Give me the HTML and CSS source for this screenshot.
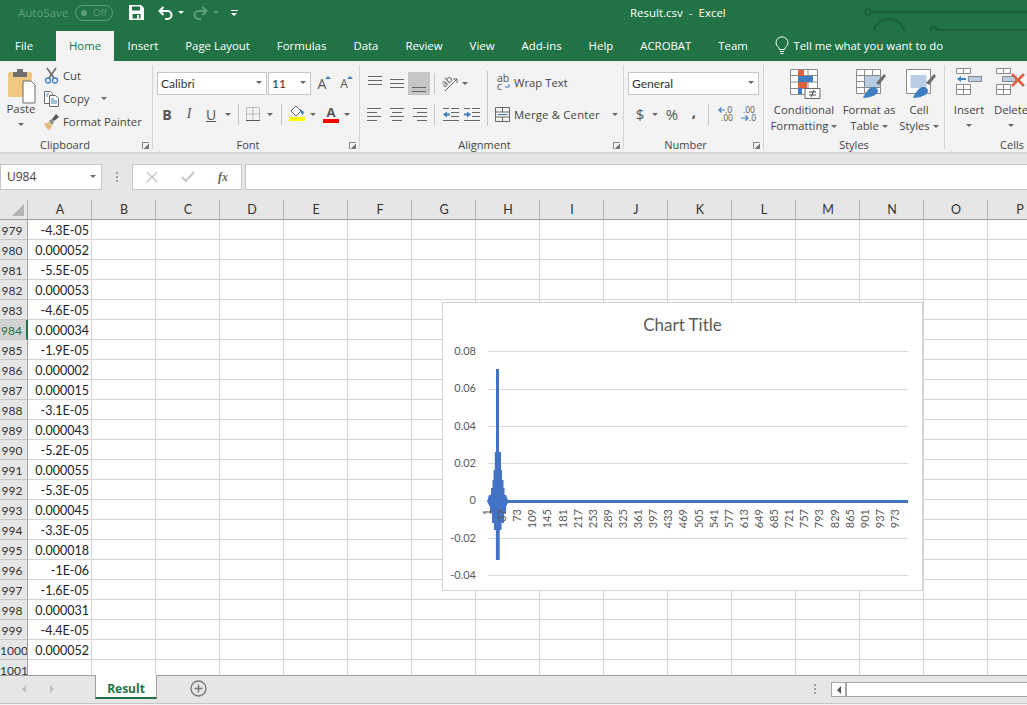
FILE: index.html
```html
<!DOCTYPE html>
<html lang="en">
<head>
    <meta charset="UTF-8">
    <title>Result.csv - Excel</title>
    <link rel="stylesheet" href="styles.css">
</head>
<body>
<div class="app">

    <div class="titlebar">
        <span class="autosave">AutoSave</span>
        <span class="toggle"><i></i><b>Off</b></span>
        <svg class="qa-save" width="15" height="15" viewBox="0 0 15 15"><path d="M0 0h12l3 3v12H0z" fill="#fff"/><path d="M3 1.500h8v4H3zM3.500 9h8v4.500h-8z" fill="#217346"/><path d="M8 10h2v3.500H8z" fill="#fff"/></svg>
        <svg class="qa-undo" width="15" height="14" viewBox="0 0 15 14"><path d="M5.500 1 1.500 5l4 4M2 5h7.500a4 4 0 0 1 0 8H7" fill="none" stroke="#fff" stroke-width="2"/></svg>
        <span class="caret white qa-c1"></span>
        <svg class="qa-redo" width="15" height="14" viewBox="0 0 15 14"><path d="M9.500 1l4 4-4 4M13 5H5.500a4 4 0 0 0 0 8H8" fill="none" stroke="#5e9d7b" stroke-width="2"/></svg>
        <span class="caret dim qa-c2"></span>
        <span class="qa-more"></span>
        <span class="doc-title">Result.csv&nbsp; -&nbsp; Excel</span>
        <svg class="circuit" width="170" height="61" viewBox="0 0 170 61"><g fill="none" stroke="#1b6239" stroke-width="2.500"><circle cx="11" cy="12" r="3"/><path d="M14 12h156"/><path d="M16 35a16 16 0 0 1 32 0"/><circle cx="77" cy="30" r="3"/><path d="M80 30h90"/></g></svg>
    </div>

    <div class="tabs">
        <span class="tab file">File</span>
        <span class="tab active">Home</span>
        <span class="tab">Insert</span>
        <span class="tab">Page Layout</span>
        <span class="tab">Formulas</span>
        <span class="tab">Data</span>
        <span class="tab">Review</span>
        <span class="tab">View</span>
        <span class="tab">Add-ins</span>
        <span class="tab">Help</span>
        <span class="tab">ACROBAT</span>
        <span class="tab">Team</span>
        <span class="tellme">
            <svg width="14" height="18" viewBox="0 0 14 18"><path d="M4.500 12.500C4 10 1 9 1 5.800a6 6 0 0 1 12 0C13 9 10 10 9.500 12.500zM5 14.500h4M5.500 16.500h3" fill="none" stroke="#fff"/></svg>
            Tell me what you want to do
        </span>
    </div>

    <div class="ribbon">

        <div class="group g-clip">
            <div class="group-body">
                <div class="big paste">
                    <svg width="28" height="34" viewBox="0 0 28 34"><rect y="3" width="24" height="25" rx="2" fill="#f0c87f"/><path d="M5 8V3h4V0h6v3h4v5z" fill="#707070"/><path d="M15 12h8l4 4v18H15z" fill="#fff" stroke="#6a6a6a"/></svg>
                    <span>Paste</span>
                    <span class="caret big-caret"></span>
                </div>
                <div class="stack">
                    <div class="small"><svg width="16" height="16" viewBox="0 0 16 16"><path d="M3 0l7 10M12 0 5 10" stroke="#6a6a6a" stroke-width="1.600" fill="none"/><circle cx="4" cy="12.500" r="2.500" fill="none" stroke="#3f7fc1" stroke-width="1.300"/><circle cx="11" cy="12.500" r="2.500" fill="none" stroke="#3f7fc1" stroke-width="1.300"/></svg>Cut</div>
                    <div class="small"><svg width="16" height="16" viewBox="0 0 16 16"><path d="M.5.500h6l2 2v10h-8z" fill="#fff" stroke="#6a6a6a"/><path d="M5.500 4.500h6l3 3v8h-9z" fill="#fff" stroke="#6a6a6a"/><path d="M7 8h3M7 10h6M7 12h6M2 3h3M2 5h2" stroke="#3f7fc1"/></svg>Copy<span class="caret copy-caret"></span></div>
                    <div class="small"><svg width="16" height="16" viewBox="0 0 16 16"><path d="M0 9c2 1 3 0 5-1l3 4c-1 2-2 3-3 4-2-1-4-4-5-7z" fill="#e3b97a"/><path d="M5 7l3-2 2 3-2 3z" fill="#8a8a8a"/><path d="M8 5l4-5 3 3-5 4z" fill="#555"/></svg>Format Painter</div>
                </div>
            </div>
            <div class="group-label">Clipboard<span class="launcher"></span></div>
        </div>

        <div class="group g-font">
            <div class="group-body col">
                <div class="row-top font-top">
                    <div class="combo font-name">Calibri<span class="caret"></span></div>
                    <div class="combo font-size">11<span class="caret"></span></div>
                    <span class="tool w22 grow">A<i></i></span>
                    <span class="tool w22 shrink">A<i></i></span>
                </div>
                <div class="row-bottom">
                    <span class="tool w22 fmt"><b>B</b></span>
                    <span class="tool w22 fmt"><em>I</em></span>
                    <span class="tool w22 fmt"><u>U</u></span>
                    <span class="tool w12"><span class="caret"></span></span>
                    <span class="sep"></span>
                    <span class="tool w18"><svg width="14" height="14" viewBox="0 0 14 14"><path d="M.5.500h13v13H.5zM7 .5v13M.5 7h13" fill="none" stroke="#888" stroke-dasharray="1 1"/><path d="M0 13.500h14" stroke="#555"/></svg></span>
                    <span class="tool w15"><span class="caret"></span></span>
                    <span class="sep"></span>
                    <span class="tool w20"><svg width="16" height="16" viewBox="0 0 16 16"><path d="M2 5 7 0l5 5-5 5z" fill="#fff" stroke="#666"/><path d="M11 3l4 3-1 3-2-2z" fill="#3f7fc1"/><path d="M0 11h16v4H0z" fill="#ffff00"/></svg></span>
                    <span class="tool w12"><span class="caret"></span></span>
                    <span class="tool w24 color-a">A<i></i></span>
                    <span class="tool w8"><span class="caret"></span></span>
                </div>
            </div>
            <div class="group-label">Font<span class="launcher"></span></div>
        </div>

        <div class="group g-align">
            <div class="group-body">
                <div class="align-left">
                    <div class="row-top">
                        <span class="tool w22 lines l-top"><i></i><i></i><i></i></span>
                        <span class="tool w22 lines l-mid"><i></i><i></i><i></i></span>
                        <span class="tool w22 lines l-bot on"><i></i><i></i></span>
                        <span class="sep"></span>
                        <span class="tool w20 orient"><svg width="16" height="16" viewBox="0 0 16 16"><path d="M3 15 15 3M15 3h-4M15 3v4" fill="none" stroke="#666"/><text x="0" y="9" transform="rotate(-42 5 7)" class="orient-text">ab</text></svg></span>
                        <span class="tool w10"><span class="caret"></span></span>
                    </div>
                    <div class="row-bottom">
                        <span class="tool w22 lines h-left"><i></i><i></i><i></i><i></i></span>
                        <span class="tool w22 lines h-center"><i></i><i></i><i></i><i></i></span>
                        <span class="tool w22 lines h-right"><i></i><i></i><i></i><i></i></span>
                        <span class="sep"></span>
                        <span class="tool w21"><svg width="16" height="13" viewBox="0 0 16 13"><path d="M8 .5h8M8 4.500h8M8 8.500h8M0 12.500h16M0 .5h6" stroke="#666" fill="none"/><path d="M0 6.500l4-3v2h3v2H4v2z" fill="#3f7fc1"/></svg></span>
                        <span class="tool w21"><svg width="16" height="13" viewBox="0 0 16 13"><path d="M8 .5h8M8 4.500h8M8 8.500h8M0 12.500h16M0 .5h6" stroke="#666" fill="none"/><path d="M7 6.500l-4-3v2H0v2h3v2z" fill="#3f7fc1"/></svg></span>
                    </div>
                </div>
                <span class="sep tall"></span>
                <div class="align-right">
                    <div class="small wrap"><svg width="13" height="17" viewBox="0 0 13 17"><text x="0" y="8" class="wrap-ab">ab</text><text x="0" y="16" class="wrap-ab">c</text><path d="M12 10v3H8" fill="none" stroke="#3f7fc1"/></svg>Wrap Text</div>
                    <div class="small merge"><svg width="15" height="15" viewBox="0 0 15 15"><path d="M.5.500h14v14H.5zM.5 5h14M.5 10h14M7.500.5V5M7.500 10v4.500" fill="none" stroke="#666"/><path d="M2.500 7.500h10" stroke="#3f7fc1"/></svg>Merge &amp; Center<span class="caret merge-caret"></span></div>
                </div>
            </div>
            <div class="group-label">Alignment<span class="launcher"></span></div>
        </div>

        <div class="group g-number">
            <div class="group-body col">
                <div class="row-top number-top">
                    <div class="combo number-format">General<span class="caret"></span></div>
                </div>
                <div class="row-bottom number-bottom">
                    <span class="tool w20 sym">$</span>
                    <span class="tool w10"><span class="caret"></span></span>
                    <span class="tool w22 sym pct">%</span>
                    <span class="tool w22 sym comma">,</span>
                    <span class="sep"></span>
                    <span class="tool w22"><svg width="15" height="16" viewBox="0 0 15 16"><text x="7" y="7" class="dec-text">.0</text><text x="3" y="15" class="dec-text">.00</text><path d="M7 4H1M3.500 1.500 1 4l2.500 2.500" fill="none" stroke="#3f7fc1" stroke-width="1.200"/></svg></span>
                    <span class="tool w22"><svg width="15" height="16" viewBox="0 0 15 16"><text x="3" y="7" class="dec-text">.00</text><text x="9" y="15" class="dec-text">.0</text><path d="M1 12h7M5.500 9.500 8 12l-2.500 2.500" fill="none" stroke="#3f7fc1" stroke-width="1.200"/></svg></span>
                </div>
            </div>
            <div class="group-label">Number<span class="launcher"></span></div>
        </div>

        <div class="group g-styles">
            <div class="group-body">
                <div class="big style-btn w70">
                    <svg class="icon-cond" width="30" height="30" viewBox="0 0 30 30"><path d="M.5.500h27v25H.5zM9 .5v25M18 .5v25M.5 6.500h27M.5 13h27M.5 19.500h27" fill="#fff" stroke="#8a8a8a"/><path d="M8 1h6v6H8zM8 13h9v6H8z" fill="#e0603c"/><path d="M8 7h15v6H8zM8 19h4v6H8z" fill="#3f7fc1"/><path d="M15 19.500h15v10H15z" fill="#fff" stroke="#666"/><path d="M19 23h7M19 26h7M24 21l-3 7" stroke="#444"/></svg>
                    <span>Conditional</span>
                    <span>Formatting<span class="caret inline"></span></span>
                </div>
                <div class="big style-btn w60">
                    <svg class="icon-shift" width="30" height="30" viewBox="0 0 30 30"><path d="M.5.500h24v24H.5zM.5 6.500h24M.5 12.500h24M.5 18.500h24M8.500.5v24M16.500.5v24" fill="#fff" stroke="#8a8a8a"/><path d="M8.500 6.500h16v12h-16z" fill="#b9cde4" stroke="#8a8a8a"/><path d="M20 14l8-9 2 2-7 9z" fill="#6e6e6e"/><path d="M7 29c2-5 6-11 10-11 3 0 5 2 5 4 0 4-8 7-15 7z" fill="#3f7fc1"/></svg>
                    <span>Format as</span>
                    <span>Table<span class="caret inline"></span></span>
                </div>
                <div class="big style-btn w40">
                    <svg class="icon-shift" width="30" height="30" viewBox="0 0 30 30"><path d="M.5.500h24v24H.5z" fill="#fff" stroke="#8a8a8a"/><path d="M4.500 6h16v13h-16z" fill="#b9cde4"/><path d="M20 14l8-9 2 2-7 9z" fill="#6e6e6e"/><path d="M7 29c2-5 6-11 10-11 3 0 5 2 5 4 0 4-8 7-15 7z" fill="#3f7fc1"/></svg>
                    <span>Cell</span>
                    <span>Styles<span class="caret inline"></span></span>
                </div>
            </div>
            <div class="group-label">Styles</div>
        </div>

        <div class="group g-cells">
            <div class="group-body">
                <div class="big cell-btn w48">
                    <svg width="27" height="27" viewBox="0 0 27 27"><path d="M.5.500h14v5H.5zM7.500.5v5M.5 16.500h14v10H.5zM7.500 16.500v10M.5 21.500h14M12.500 8.500h13v5h-13zM19 8.500v5" fill="#fff" stroke="#8a8a8a"/><path d="M12.500 8.500h13v5h-13z" fill="#b9cde4" stroke="#8a8a8a"/><path d="M1 11l4-3v2h5v2H5v2z" fill="#3f7fc1"/></svg>
                    <span>Insert</span>
                    <span class="caret big-caret"></span>
                </div>
                <div class="big cell-btn w36">
                    <svg width="30" height="27" viewBox="0 0 30 27"><path d="M.5.500h14v5H.5zM7.500.5v5M.5 16.500h14v10H.5zM7.500 16.500v10M.5 21.500h14" fill="#fff" stroke="#8a8a8a"/><path d="M6.500 8.500h13v5h-13z" fill="#b9cde4" stroke="#8a8a8a"/><path d="M16 6l12 12M28 6 16 18" stroke="#e0603c" stroke-width="2.500"/></svg>
                    <span>Delete</span>
                    <span class="caret big-caret"></span>
                </div>
            </div>
            <div class="group-label">Cells</div>
        </div>
    </div>

    <div class="formula-bar">
        <div class="name-box">U984<span class="caret"></span></div>
        <span class="grip"></span>
        <div class="fx-buttons">
            <svg width="12" height="12" viewBox="0 0 12 12"><path d="M1 1l10 10M11 1 1 11" stroke="#c6c6c6" stroke-width="1.500"/></svg>
            <svg width="14" height="12" viewBox="0 0 14 12"><path d="M1 6l4 4 8-9" fill="none" stroke="#c6c6c6" stroke-width="2"/></svg>
            <span class="fx">fx</span>
        </div>
        <div class="formula-input"></div>
    </div>

    <div class="sheet">
        <div class="col-heads">
            <div class="corner"><i></i></div>
            <div>A</div><div>B</div><div>C</div><div>D</div><div>E</div><div>F</div><div>G</div><div>H</div>
            <div>I</div><div>J</div><div>K</div><div>L</div><div>M</div><div>N</div><div>O</div><div>P</div>
        </div>
        <div class="rows">
            <div class="row"><div class="rh">979</div><div class="ca">-4.3E-05</div><div class="blank"></div></div>
            <div class="row"><div class="rh">980</div><div class="ca">0.000052</div><div class="blank"></div></div>
            <div class="row"><div class="rh">981</div><div class="ca">-5.5E-05</div><div class="blank"></div></div>
            <div class="row"><div class="rh">982</div><div class="ca">0.000053</div><div class="blank"></div></div>
            <div class="row"><div class="rh">983</div><div class="ca">-4.6E-05</div><div class="blank"></div></div>
            <div class="row"><div class="rh selected">984</div><div class="ca">0.000034</div><div class="blank"></div></div>
            <div class="row"><div class="rh">985</div><div class="ca">-1.9E-05</div><div class="blank"></div></div>
            <div class="row"><div class="rh">986</div><div class="ca">0.000002</div><div class="blank"></div></div>
            <div class="row"><div class="rh">987</div><div class="ca">0.000015</div><div class="blank"></div></div>
            <div class="row"><div class="rh">988</div><div class="ca">-3.1E-05</div><div class="blank"></div></div>
            <div class="row"><div class="rh">989</div><div class="ca">0.000043</div><div class="blank"></div></div>
            <div class="row"><div class="rh">990</div><div class="ca">-5.2E-05</div><div class="blank"></div></div>
            <div class="row"><div class="rh">991</div><div class="ca">0.000055</div><div class="blank"></div></div>
            <div class="row"><div class="rh">992</div><div class="ca">-5.3E-05</div><div class="blank"></div></div>
            <div class="row"><div class="rh">993</div><div class="ca">0.000045</div><div class="blank"></div></div>
            <div class="row"><div class="rh">994</div><div class="ca">-3.3E-05</div><div class="blank"></div></div>
            <div class="row"><div class="rh">995</div><div class="ca">0.000018</div><div class="blank"></div></div>
            <div class="row"><div class="rh">996</div><div class="ca">-1E-06</div><div class="blank"></div></div>
            <div class="row"><div class="rh">997</div><div class="ca">-1.6E-05</div><div class="blank"></div></div>
            <div class="row"><div class="rh">998</div><div class="ca">0.000031</div><div class="blank"></div></div>
            <div class="row"><div class="rh">999</div><div class="ca">-4.4E-05</div><div class="blank"></div></div>
            <div class="row"><div class="rh">1000</div><div class="ca">0.000052</div><div class="blank"></div></div>
            <div class="row"><div class="rh">1001</div><div class="ca"></div><div class="blank"></div></div>
        </div>

        <svg class="chart" width="481" height="289" viewBox="442 302 481 289">
            <text class="chart-title" x="682.500" y="331" text-anchor="middle">Chart Title</text>
            <g stroke="#d9d9d9">
                <path d="M488 351.500h420M488 389.500h420M488 426.500h420M488 463.500h420M488 538.500h420M488 575.500h420"/>
            </g>
            <g class="y-labels" text-anchor="end">
                <text x="476" y="355">0.08</text>
                <text x="476" y="392">0.06</text>
                <text x="476" y="430">0.04</text>
                <text x="476" y="467">0.02</text>
                <text x="476" y="504">0</text>
                <text x="476" y="542">-0.02</text>
                <text x="476" y="579">-0.04</text>
            </g>
            <path d="M488 501.500h420" stroke="#4472c4" stroke-width="3"/>
            <path fill="#4472c4" d="M496 369H499V452H501V470H502V480H503.500V488H504.500V495H506L508.500 501.500L506 507V513H504V523H501.500V530H499.700V560H495.900V530H494V523H492V513H490V507L487 501.500L489 495H491V488H492.500V480H493.500V470H494.800V452H496Z"/>
            <g class="x-labels" text-anchor="end">
                <text transform="translate(491 509) rotate(-90)">1</text>
                <text transform="translate(506 509) rotate(-90)">37</text>
                <text transform="translate(521 509) rotate(-90)">73</text>
                <text transform="translate(536 509) rotate(-90)">109</text>
                <text transform="translate(551 509) rotate(-90)">145</text>
                <text transform="translate(567 509) rotate(-90)">181</text>
                <text transform="translate(582 509) rotate(-90)">217</text>
                <text transform="translate(597 509) rotate(-90)">253</text>
                <text transform="translate(612 509) rotate(-90)">289</text>
                <text transform="translate(627 509) rotate(-90)">325</text>
                <text transform="translate(642 509) rotate(-90)">361</text>
                <text transform="translate(657 509) rotate(-90)">397</text>
                <text transform="translate(672 509) rotate(-90)">433</text>
                <text transform="translate(687 509) rotate(-90)">469</text>
                <text transform="translate(703 509) rotate(-90)">505</text>
                <text transform="translate(718 509) rotate(-90)">541</text>
                <text transform="translate(733 509) rotate(-90)">577</text>
                <text transform="translate(748 509) rotate(-90)">613</text>
                <text transform="translate(763 509) rotate(-90)">649</text>
                <text transform="translate(778 509) rotate(-90)">685</text>
                <text transform="translate(793 509) rotate(-90)">721</text>
                <text transform="translate(808 509) rotate(-90)">757</text>
                <text transform="translate(823 509) rotate(-90)">793</text>
                <text transform="translate(839 509) rotate(-90)">829</text>
                <text transform="translate(854 509) rotate(-90)">865</text>
                <text transform="translate(869 509) rotate(-90)">901</text>
                <text transform="translate(884 509) rotate(-90)">937</text>
                <text transform="translate(899 509) rotate(-90)">973</text>
            </g>
        </svg>
    </div>

    <div class="sheet-tabs">
        <span class="nav-arrows"><i class="arrow-l"></i><i class="arrow-r"></i></span>
        <span class="sheet-tab">Result</span>
        <svg class="add-sheet" width="17" height="17" viewBox="0 0 17 17"><circle cx="8.500" cy="8.500" r="7.500" fill="none" stroke="#777" stroke-width="1.300"/><path d="M8.500 4.500v8M4.500 8.500h8" stroke="#777" stroke-width="1.500"/></svg>
        <span class="grip tabs-grip"></span>
        <div class="hscroll"><span class="hscroll-btn"><i></i></span><span class="hscroll-track"></span></div>
    </div>
    <div class="statusbar"></div>
</div>
</body>
</html>
```

FILE: styles.css
```css
* {
    box-sizing: border-box;
}
html, body {
    margin: 0;
    padding: 0;
    height: 705px;
    overflow: hidden;
}
body {
    font-family: "Open Sans", "Noto Sans", sans-serif;
    font-size: 12px;
    color: #444;
    background-color: #e6e6e6;
}
svg {
    overflow: visible;
}
.app {
    width: 1027px;
    height: 705px;
    display: flex;
    flex-direction: column;
    overflow: hidden;
}

/* shared little things */
.caret {
    display: inline-block;
    width: 0;
    height: 0;
    border-left: 3.500px solid transparent;
    border-right: 3.500px solid transparent;
    border-top: 3.500px solid #666;
}
.caret.white {
    border-top-color: #fff;
}
.caret.dim {
    border-top-color: #5e9d7b;
}
.caret.inline {
    margin-left: 3px;
    vertical-align: 2px;
    border-left-width: 3px;
    border-right-width: 3px;
    border-top-width: 3px;
}
.sep {
    flex: none;
    width: 1px;
    height: 21px;
    margin: 0 5px 0 4px;
    background-color: #c6c6c6;
}

/* title bar */
.titlebar {
    position: relative;
    flex: none;
    height: 31px;
    display: flex;
    align-items: center;
    padding: 0 0 6px 18px;
    color: #fff;
    background-color: #217346;
}
.autosave {
    width: 57px;
    font-size: 11.500px;
    color: #5e9d7b;
}
.toggle {
    flex: none;
    width: 38px;
    height: 16px;
    display: flex;
    align-items: center;
    padding-left: 5px;
    border: 1px solid #5e9d7b;
    border-radius: 8px;
}
.toggle i {
    width: 6px;
    height: 6px;
    border-radius: 50%;
    background-color: #5e9d7b;
}
.toggle b {
    margin-left: 6px;
    font-weight: 400;
    font-size: 9.500px;
    color: #5e9d7b;
}
.qa-save {
    margin-left: 16px;
}
.qa-undo {
    margin-left: 14px;
}
.qa-c1 {
    margin-left: 5px;
}
.qa-redo {
    margin-left: 9px;
}
.qa-c2 {
    margin-left: 5px;
}
.qa-more {
    width: 7px;
    height: 6px;
    margin-left: 12px;
    border-top: 1px solid #fff;
    position: relative;
}
.qa-more::after {
    content: "";
    position: absolute;
    left: 0;
    top: 2px;
    border-left: 3.500px solid transparent;
    border-right: 3.500px solid transparent;
    border-top: 3.500px solid #fff;
}
.doc-title {
    margin-left: 392px;
    font-size: 11.500px;
    white-space: nowrap;
}
.circuit {
    position: absolute;
    left: 857px;
    top: 0;
}

/* ribbon tabs */
.tabs {
    flex: none;
    height: 30px;
    display: flex;
    align-items: stretch;
    color: #fff;
    background-color: #217346;
    position: relative;
}
.tab {
    padding: 0 13.500px;
    line-height: 29px;
    font-size: 11.400px;
    white-space: nowrap;
}
.tab.file {
    width: 56px;
    padding: 0 0 0 15px;
}
.tab.active {
    width: 58px;
    padding: 0;
    text-align: center;
    color: #217346;
    background-color: #f3f3f3;
}
.tellme {
    display: flex;
    align-items: center;
    gap: 4px;
    margin-left: 14px;
    padding-bottom: 1px;
    font-size: 11.400px;
    white-space: nowrap;
}

/* ribbon */
.ribbon {
    flex: none;
    height: 93px;
    display: flex;
    padding-top: 4px;
    background-color: #f3f3f3;
    border-bottom: 2px solid #d6d6d6;
    overflow: hidden;
}
.group {
    position: relative;
    flex: none;
    height: 84px;
    display: flex;
    flex-direction: column;
    border-right: 1px solid #d4d4d4;
}
.g-clip { width: 153px; }
.g-font { width: 207px; }
.g-align { width: 264px; }
.g-number { width: 140px; }
.g-styles { width: 181px; }
.g-cells { width: 134px; border-right: 0; }
.group-body {
    flex: none;
    height: 72px;
    display: flex;
}
.group-body.col {
    flex-direction: column;
}
.group-label {
    position: relative;
    height: 12px;
    line-height: 16px;
    text-align: center;
    font-size: 11px;
    color: #444;
}
.g-clip .group-label { padding-right: 22px; }
.g-font .group-label { padding-right: 16px; }
.g-align .group-label { padding-right: 14px; }
.g-number .group-label { padding-right: 16px; }
.launcher {
    position: absolute;
    right: 3px;
    top: 5px;
    width: 7px;
    height: 7px;
    border-left: 1px solid #8a8a8a;
    border-top: 1px solid #8a8a8a;
    background: linear-gradient(135deg, transparent 55%, #777 55%);
}
.big {
    display: flex;
    flex-direction: column;
    align-items: center;
    flex: none;
    line-height: 16px;
    font-size: 11.300px;
    white-space: nowrap;
}
.big-caret {
    margin-top: 6px;
}
.paste {
    width: 42px;
    padding-top: 4px;
}
.paste svg {
    margin-bottom: -2px;
    margin-left: 1px;
}
.stack {
    display: flex;
    flex-direction: column;
    margin: -1px 0 0 2px;
}
.small {
    height: 23px;
    display: flex;
    align-items: center;
    gap: 3px;
    font-size: 11.300px;
    white-space: nowrap;
}
.copy-caret {
    margin-left: 9px;
}
.merge-caret {
    margin-left: 8px;
}
.row-top {
    display: flex;
    align-items: center;
    height: 23px;
    margin-top: 7px;
}
.row-bottom {
    display: flex;
    align-items: center;
    height: 22px;
    margin-top: 8px;
}
.g-font .row-top { padding-left: 4px; }
.g-font .row-bottom { padding-left: 3px; }
.tool {
    flex: none;
    height: 22px;
    display: flex;
    align-items: center;
    justify-content: center;
}
.w8 { width: 8px; }
.w10 { width: 10px; }
.w12 { width: 12px; }
.w15 { width: 15px; }
.w18 { width: 18px; }
.w20 { width: 20px; }
.w21 { width: 21px; }
.w22 { width: 22px; }
.w24 { width: 24px; }
.w36 { width: 36px; }
.w40 { width: 40px; }
.w48 { width: 48px; }
.w60 { width: 60px; }
.w70 { width: 70px; }

/* font group */
.combo {
    position: relative;
    flex: none;
    height: 23px;
    padding-left: 3px;
    line-height: 21px;
    font-family: "Lato", sans-serif;
    font-size: 12px;
    color: #333;
    background-color: #fff;
    border: 1px solid #c6c6c6;
}
.combo .caret {
    position: absolute;
    right: 4px;
    top: 8px;
}
.font-name { width: 110px; }
.font-size { width: 43px; margin-left: 1px; }
.grow, .shrink {
    position: relative;
    font-size: 14px;
    color: #555;
}
.shrink {
    font-size: 12px;
}
.grow i, .shrink i {
    position: absolute;
    right: 2px;
    top: 3px;
    border-left: 3px solid transparent;
    border-right: 3px solid transparent;
    border-bottom: 3px solid #3f7fc1;
}
.fmt {
    font-size: 14px;
    color: #555;
}
.fmt em {
    font-family: "Liberation Serif", serif;
}
.color-a {
    position: relative;
    font-weight: 700;
    font-size: 13px;
    color: #555;
    padding-bottom: 5px;
}
.color-a i {
    position: absolute;
    left: 4px;
    bottom: 2px;
    width: 16px;
    height: 4px;
    background-color: #ff0000;
}

/* alignment group */
.align-left {
    width: 127px;
    padding-left: 4px;
    flex: none;
}
.sep.tall {
    height: 55px;
    margin: 6px 0 0;
}
.align-right {
    padding-left: 7px;
    padding-top: 5px;
}
.align-right .small {
    height: 38px;
    gap: 4px;
}
.align-right .wrap {
    margin-left: 2px;
    height: 24px;
    gap: 4px;
}
.merge {
    letter-spacing: .2px;
    padding-top: 2px;
}
.orient-text {
    font-size: 10px;
    fill: #555;
}
.wrap-ab {
    font-size: 10.500px;
    fill: #555;
}
.lines {
    flex-direction: column;
    gap: 3px;
}
.lines i {
    display: block;
    width: 14px;
    height: 1px;
    background-color: #666;
}
.l-top { justify-content: flex-start; padding-top: 3px; }
.l-mid { justify-content: center; }
.l-bot { justify-content: flex-end; padding-bottom: 3px; }
.lines.on {
    height: 23px;
    background-color: #c6c6c6;
}
.h-left { align-items: flex-start; padding-left: 3px; }
.h-right { align-items: flex-end; padding-right: 3px; }
.h-left i:nth-child(even), .h-center i:nth-child(even), .h-right i:nth-child(even) {
    width: 10px;
}
.h-left i, .h-center i, .h-right i {
    width: 14px;
}

/* number group */
.number-top { padding-left: 4px; }
.number-format { width: 131px; }
.number-bottom { padding-left: 6px; }
.sym {
    font-size: 15px;
    color: #555;
}
.pct { padding-left: 2px; }
.comma { font-weight: 700; padding: 0 0 6px 2px; }
.dec-text {
    font-size: 8.500px;
    fill: #555;
}

/* styles and cells */
.g-styles .group-body {
    padding-left: 5px;
}
.style-btn svg {
    height: 30px;
    margin: 4px 0 3px;
}
.style-btn .icon-cond {
    margin-left: 2px;
}
.style-btn .icon-shift {
    margin-left: 4px;
}
.cell-btn svg {
    height: 27px;
    margin: 3px 0 7px;
}

/* formula bar */
.formula-bar {
    flex: none;
    height: 46px;
    display: flex;
    align-items: flex-start;
    padding-top: 10px;
}
.name-box {
    position: relative;
    flex: none;
    width: 102px;
    height: 26px;
    padding-left: 6px;
    line-height: 24px;
    font-size: 12px;
    background-color: #fff;
    border: 1px solid #c6c6c6;
}
.name-box .caret {
    position: absolute;
    right: 5px;
    top: 10px;
}
.grip {
    flex: none;
    width: 2px;
    height: 10px;
    margin: 8px 14px 0 14px;
    background: repeating-linear-gradient(to bottom, #9f9f9f 0, #9f9f9f 2px, transparent 2px, transparent 4px);
}
.fx-buttons {
    flex: none;
    width: 110px;
    height: 26px;
    display: flex;
    align-items: center;
    justify-content: space-between;
    padding: 0 13px;
    background-color: #fff;
    border: 1px solid #c6c6c6;
}
.fx {
    font-family: "Liberation Serif", serif;
    font-style: italic;
    font-weight: 700;
    font-size: 12px;
    color: #666;
}
.formula-input {
    flex: 1;
    height: 26px;
    margin-left: 3px;
    background-color: #fff;
    border: 1px solid #c6c6c6;
    border-right: 0;
}

/* the sheet */
.sheet {
    position: relative;
    flex: none;
    height: 475px;
    overflow: hidden;
    background-color: #fff;
    font-family: "Lato", sans-serif;
}
.col-heads {
    display: grid;
    grid-template-columns: 28px repeat(16, 64px);
    height: 20px;
    line-height: 19px;
    text-align: center;
    font-size: 12.500px;
    color: #333;
    background-color: #e6e6e6;
    border-bottom: 1px solid #9f9f9f;
}
.col-heads > div {
    padding-left: 1px;
    border-right: 1px solid #b4b4b4;
}
.corner {
    position: relative;
}
.corner i {
    position: absolute;
    left: 12px;
    top: 4px;
    border-left: 12px solid transparent;
    border-bottom: 12px solid #b4b4b4;
}
.row {
    display: flex;
    height: 20px;
    line-height: 21px;
    font-size: 12.500px;
    color: #222;
}
.rh {
    flex: none;
    width: 28px;
    padding-right: 3px;
    text-align: center;
    overflow: hidden;
    white-space: nowrap;
    font-size: 12px;
    color: #333;
    background-color: #e6e6e6;
    border-right: 1px solid #9f9f9f;
    border-bottom: 1px solid #c6c6c6;
}
.rh.selected {
    color: #217346;
    background-color: #d2d2d2;
    border-right: 2px solid #217346;
}
.ca {
    flex: none;
    width: 64px;
    padding-right: 2px;
    text-align: right;
    border-right: 1px solid #d4d4d4;
    border-bottom: 1px solid #d4d4d4;
}
.blank {
    flex: 1;
    border-bottom: 1px solid #d4d4d4;
    background: repeating-linear-gradient(to right, transparent 0, transparent 63px, #d4d4d4 63px, #d4d4d4 64px);
}
.chart {
    position: absolute;
    left: 442px;
    top: 102px;
    background-color: #fff;
    outline: 1px solid #d4d4d4;
    outline-offset: -1px;
}
.chart-title {
    font-size: 17px;
    fill: #595959;
}
.y-labels, .x-labels {
    font-size: 11px;
    fill: #595959;
}

/* sheet tabs and bottom strip */
.sheet-tabs {
    flex: none;
    height: 28px;
    display: flex;
    align-items: flex-start;
    background-color: #e6e6e6;
    border-top: 1px solid #9f9f9f;
}
.nav-arrows {
    flex: none;
    width: 95px;
    height: 26px;
    display: flex;
    align-items: center;
    gap: 24px;
    padding-left: 22px;
}
.arrow-l {
    border-top: 4px solid transparent;
    border-bottom: 4px solid transparent;
    border-right: 4px solid #c0c0c0;
}
.arrow-r {
    border-top: 4px solid transparent;
    border-bottom: 4px solid transparent;
    border-left: 4px solid #c0c0c0;
}
.sheet-tab {
    flex: none;
    width: 62px;
    height: 24px;
    margin-top: -1px;
    line-height: 27px;
    text-align: center;
    font-weight: 700;
    font-size: 12px;
    color: #217346;
    background-color: #fff;
    border-left: 1px solid #9f9f9f;
    border-right: 1px solid #9f9f9f;
    border-bottom: 2px solid #217346;
}
.add-sheet {
    flex: none;
    margin: 4px 0 0 33px;
}
.tabs-grip {
    margin: 8px 15px 0 auto;
}
.hscroll {
    flex: none;
    width: 196px;
    height: 15px;
    margin-top: 6px;
    display: flex;
    border: 1px solid #a6a6a6;
    border-right: 0;
}
.hscroll-btn {
    flex: none;
    width: 15px;
    display: flex;
    align-items: center;
    justify-content: center;
    background-color: #fff;
    border-right: 2px solid #a6a6a6;
}
.hscroll-btn i {
    border-top: 4px solid transparent;
    border-bottom: 4px solid transparent;
    border-right: 4px solid #555;
}
.hscroll-track {
    flex: 1;
    background-color: #fff;
}
.statusbar {
    flex: 1;
    background-color: #f3f3f3;
    border-top: 1px solid #c6c6c6;
}
```
